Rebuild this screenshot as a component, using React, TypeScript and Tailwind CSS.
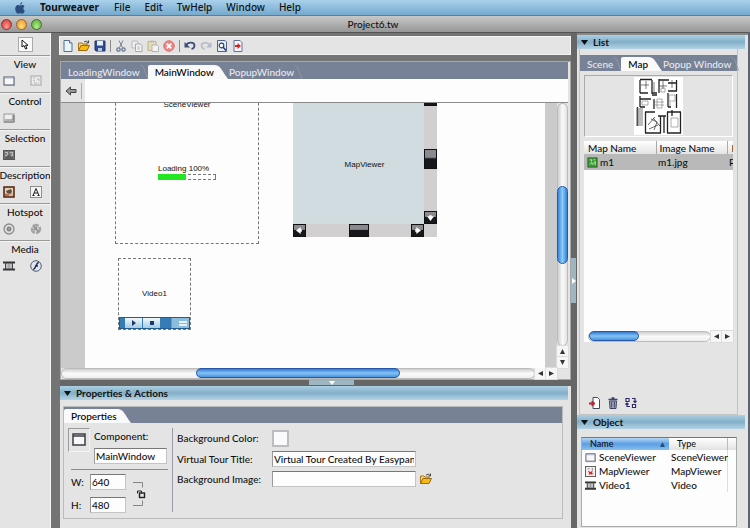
import type { ReactNode } from 'react'
import clsx from 'clsx'

const paletteGroups = [
  { title: 'View', tools: ['window', 'viewer'] },
  { title: 'Control', tools: ['button'] },
  { title: 'Selection', tools: ['thumbs'] },
  { title: 'Description', tools: ['picture', 'text'] },
  { title: 'Hotspot', tools: ['ring', 'spin'] },
  { title: 'Media', tools: ['film', 'flash'] },
]

const objects = [
  { icon: 'window', name: 'SceneViewer', type: 'SceneViewer' },
  { icon: 'map', name: 'MapViewer', type: 'MapViewer' },
  { icon: 'film', name: 'Video1', type: 'Video' },
]

const fileTools = ['new', 'open', 'save']
const editTools = ['cut', 'copy', 'paste', 'delete']
const historyTools = ['undo', 'redo', 'preview', 'publish']

const glyphs: Record<string, ReactNode> = {
  window: (
    <>
      <rect x="1" y="2" width="10" height="8" fill="#f8f8f8" stroke="#4d5666" />
      <path d="M1 10.5h10.5V3" stroke="#8a93a5" fill="none" />
      <path d="M2 3h8" stroke="#aab6cc" />
    </>
  ),
  viewer: (
    <>
      <rect x="1" y="1" width="10" height="9" fill="#ececec" stroke="#a5a5a5" />
      <path d="M3 3h2M7 4h2v2M3 5l2 1M4 8h3M8 8h1" stroke="#b4b4b4" fill="none" />
    </>
  ),
  button: (
    <>
      <rect x="1" y="2" width="10" height="8" fill="#eee" stroke="#999" />
      <path d="M2 8h8V3M1 10h10V3" stroke="#777" fill="none" />
    </>
  ),
  thumbs: (
    <>
      <rect x="0.5" y="1.5" width="11" height="9" fill="#777" stroke="#555" />
      <path d="M2 3h3v4H2zM7 3h3v4H7z" fill="#b9b9b9" />
      <path d="M3 4v2M4 7h4M8 4v2M2 9h8" stroke="#444" />
    </>
  ),
  picture: (
    <>
      <rect x="1" y="1" width="10" height="10" fill="#c9b9a5" stroke="#5b2c17" strokeWidth="1.6" />
      <path d="M2 2h8v5H2z" fill="#e3d3b4" />
      <path d="M3 5l5-2 1 3-2 2-3-1z" fill="#5b4b49" />
      <path d="M2 9h4" stroke="#c3512a" strokeWidth="1.5" />
    </>
  ),
  text: (
    <>
      <rect x="0.5" y="0.5" width="11" height="11" fill="#f4f4f4" stroke="#333" strokeDasharray="1 1" />
      <path d="M3 9.5L6 2.5l3 7M4 7h4M2.5 9.5h2M7.5 9.5h2" stroke="#222" fill="none" />
    </>
  ),
  ring: (
    <>
      <circle cx="6" cy="6" r="5" fill="#ddd" stroke="#8d8d8d" strokeWidth="1.3" />
      <circle cx="6" cy="6" r="2" fill="#999" stroke="#777" />
    </>
  ),
  spin: (
    <>
      <circle cx="6" cy="6" r="4" fill="#d0d0d0" stroke="#a5a5a5" strokeWidth="2.4" strokeDasharray="6 1.5" />
      <path d="M3 3l6 6M4 7l3-3" stroke="#8b8b8b" strokeWidth="1.3" />
    </>
  ),
  film: (
    <>
      <rect x="2" y="3" width="8" height="6" fill="#bcbcc2" />
      <path d="M0 2.5h12M0 9.5h12" stroke="#333" strokeWidth="2" />
      <path d="M2.5 2v8M9.5 2v8" stroke="#444" />
      <path d="M6 3v6" stroke="#777" strokeWidth=".6" />
    </>
  ),
  flash: (
    <>
      <circle cx="6" cy="6" r="5.3" fill="#dfe5ee" stroke="#58606e" />
      <path d="M8.8 2.5C6 2.5 6 9 3.2 9.5M5 6h3" stroke="#1f2f55" strokeWidth="1.5" fill="none" />
    </>
  ),
  map: (
    <>
      <rect x="0.5" y="0.5" width="11" height="11" fill="#f3eeee" stroke="#555" />
      <path d="M3 3h2M8 2v3M9 8H7" stroke="#888" />
      <path d="M3 5l3 1.5L8.5 5 7.5 8l1 1.5L6 9 4 9.500 4.500 7.500z" fill="#e02424" />
    </>
  ),
  new: (
    <>
      <path d="M2 .5h5.5L10 3v8.5H2z" fill="#eaf4fb" stroke="#53708f" />
      <path d="M7.5 .5V3H10" fill="#fff" stroke="#53708f" />
    </>
  ),
  open: (
    <>
      <path d="M.5 10.5V3h3.5l1 1h4v2" fill="#f6d365" stroke="#a4771b" />
      <path d="M.5 10.5L3 5.5h8.5L9 10.5z" fill="#f9b915" stroke="#9c6a12" />
      <path d="M6 2q2.5-2 4 .5M10.5 .5v2.5H8.5" fill="none" stroke="#454545" />
    </>
  ),
  save: (
    <>
      <path d="M1 1h10v10H2l-1-1z" fill="#2e4c92" stroke="#22376b" />
      <path d="M3 1h6v4.5H3z" fill="#e8eef8" />
      <path d="M4 8h4v3H4z" fill="#b9c5df" />
    </>
  ),
  cut: (
    <>
      <path d="M4 .5l3.5 7M8 .5L4.5 7.5" stroke="#7b8596" />
      <circle cx="3.5" cy="9.5" r="1.7" fill="none" stroke="#66738f" strokeWidth="1.2" />
      <circle cx="8.5" cy="9.5" r="1.7" fill="none" stroke="#66738f" strokeWidth="1.2" />
    </>
  ),
  copy: (
    <>
      <path d="M1 1h5l1 1v6H1z" fill="#eee" stroke="#b7bcc3" />
      <path d="M4.5 4h5l1.5 1.5v6H4.5z" fill="#f3f3f3" stroke="#a5aab3" />
      <path d="M6 7h3M6 9h3" stroke="#bbb" />
    </>
  ),
  paste: (
    <>
      <path d="M1 1.5h8v9H1z" fill="#e6dcb8" stroke="#bdb292" />
      <path d="M3.5 .5h3v2h-3z" fill="#bbb" />
      <path d="M5 5h5l1.5 1.5v5H5z" fill="#f3f3f3" stroke="#b0b4bb" />
    </>
  ),
  delete: (
    <>
      <circle cx="6" cy="6" r="5.3" fill="#ea8585" stroke="#dd7373" />
      <path d="M3.7 3.7l4.6 4.6M8.3 3.7L3.7 8.3" stroke="#fff" strokeWidth="1.8" />
    </>
  ),
  undo: (
    <>
      <path d="M2 5.500C4 1.500 10.500 2 10.500 5.500c0 2-1 3-3 3.500" fill="none" stroke="#3f4f79" strokeWidth="1.8" />
      <path d="M.5 2v5.5H6z" fill="#3f4f79" />
    </>
  ),
  redo: (
    <>
      <path d="M10 5.500C8 1.500 1.500 2 1.500 5.500c0 2 1 3 3 3.500" fill="none" stroke="#b4bac8" strokeWidth="1.6" />
      <path d="M11.5 2v5.5H6z" fill="#b4bac8" />
    </>
  ),
  preview: (
    <>
      <path d="M1.5 .5H9l1.5 1.5v9.5h-9z" fill="#e6eef8" stroke="#50648b" />
      <circle cx="5.5" cy="5.5" r="2.3" fill="#fff" stroke="#2d4274" strokeWidth="1.2" />
      <path d="M7 7l3 3.5" stroke="#2d4274" strokeWidth="1.6" />
    </>
  ),
  publish: (
    <>
      <path d="M2 .5h6L10 2.5v9H2z" fill="#f5f5fa" stroke="#60729b" />
      <path d="M3 5h2.500V3L9 6 5.500 9V7H3z" fill="#e02020" />
    </>
  ),
  add: (
    <>
      <path d="M4 .5h4.5l2 2v9H4z" fill="#fff" stroke="#444b5c" />
      <path d="M0 6.5h6M3.5 4v5" stroke="#c3202f" strokeWidth="2" />
    </>
  ),
  trash: (
    <>
      <path d="M1.5 2.5h9M4.5 1h3" stroke="#3b4466" strokeWidth="1.4" />
      <path d="M2.5 4h7L9 11.5H3z" fill="#a4abc1" stroke="#3b4466" />
      <path d="M4.7 5v5.5M7.3 5v5.5" stroke="#3b4466" />
    </>
  ),
  swap: (
    <>
      <path d="M1 1.5h3v3H1zM7.5 7.5h3v3h-3z" fill="#fff" stroke="#2f2b6b" strokeWidth="1.2" />
      <path d="M7 1.5h3V5M8.5 4L10 5.5 11.5 4M5 9.5H2V6.5M.5 7.5L2 6l1.5 1.5" fill="none" stroke="#2f2b6b" strokeWidth="1.2" />
    </>
  ),
  green: (
    <>
      <rect x="1" y="1" width="10" height="10" fill="#3f9c37" stroke="#2a5b25" />
      <path d="M3 3h2v2M7 3h2M3 8l2-2 1 2 3-3v4" stroke="#bfe8a8" fill="none" />
    </>
  ),
}

function Icon({ name, className = 'size-3' }: { name: string; className?: string }) {
  return (
    <svg viewBox="0 0 12 12" aria-hidden="true" className={clsx('shrink-0', className)}>
      {glyphs[name]}
    </svg>
  )
}

function ToolButton({ name }: { name: string }) {
  return (
    <button aria-label={name} className="flex size-4 items-center justify-center">
      <Icon name={name} />
    </button>
  )
}

function Tab({ label, active }: { label: string; active?: boolean }) {
  return (
    <button role="tab" aria-selected={!!active} className="flex h-[14px] items-stretch font-medium whitespace-nowrap">
      <span className={clsx('pl-[7px] leading-[14px]', active ? 'rounded-tl-xs bg-[#fafafa] text-black' : 'text-[#e6e9f0]')}>
        {label}
      </span>
      <svg viewBox="0 0 14 14" preserveAspectRatio="none" aria-hidden="true" className={clsx('h-[14px]', active ? 'w-[14px]' : 'w-2')}>
        {active ? (
          <path d="M0 0C7 0 7 5 14 14H0z" fill="#fafafa" />
        ) : (
          <path d="M0 0C7 0 7 5 14 14" fill="none" stroke="#959cab" />
        )}
      </svg>
    </button>
  )
}

function PanelHeader({ title }: { title: string }) {
  return (
    <h2 className="h-[14px] shrink-0 bg-linear-to-b from-[#acd0e3] via-[#82afc9] to-[#b4d3e4]">
      <button className="flex w-full items-center gap-[5px] pl-1 leading-[14px] font-bold">
        <svg viewBox="0 0 7 5" className="h-[5px] w-[7px]" aria-hidden="true">
          <path d="M0 0h7L3.5 5z" fill="#111" />
        </svg>
        {title}
      </button>
    </h2>
  )
}

function Arrow({ dir }: { dir: string }) {
  return (
    <button aria-label={dir} className="flex size-[11px] shrink-0 items-center justify-center bg-[#f6f6f6] outline outline-[#dcdcdc]">
      <svg
        viewBox="0 0 6 6"
        className={clsx('size-[5px]', dir === 'right' && 'rotate-90', dir === 'down' && 'rotate-180', dir === 'left' && '-rotate-90')}
      >
        <path d="M3 0l3 6H0z" fill="#333" />
      </svg>
    </button>
  )
}

function AppleMenuBar() {
  return (
    <nav className="flex h-[15px] shrink-0 items-center bg-linear-to-b from-[#a9d1ea] to-[#75a9ce] pl-[14px] font-['Noto_Sans',sans-serif] leading-[15px] font-medium">
      <a href="#apple" aria-label="Apple menu" className="mr-[14px]">
        <svg viewBox="0 0 12 13" className="h-3 w-3">
          <path
            d="M8.500 3.300c-1 0-1.600.5-2.200.5S4.800 3.300 4 3.300C2.200 3.300.8 4.800.8 7.300c0 2.700 1.700 5.400 3.200 5.400.8 0 1.200-.5 2.200-.5s1.300.5 2.100.5c1.300 0 2.500-1.900 2.900-3.200C9.300 8.600 9 5.800 11 4.700c-.6-.9-1.500-1.400-2.500-1.400zM6 3C5.900 1.600 7 .4 8.400.2 8.500 1.700 7.400 2.900 6 3z"
            fill="#2b4e7e"
          />
        </svg>
      </a>
      <a href="#app" className="mr-[15px] font-bold">Tourweaver</a>
      <div className="flex gap-[14px]">
        {['File', 'Edit', 'TwHelp', 'Window', 'Help'].map((item) => (
          <a key={item} href={'#' + item}>{item}</a>
        ))}
      </div>
    </nav>
  )
}

function TitleBar() {
  return (
    <header className="flex h-[17px] shrink-0 items-center gap-1 border-t border-[#777] bg-linear-to-b from-[#c8c8c8] to-[#979797] pl-[1px]">
      <button aria-label="Close" className="size-[11px] rounded-full border border-[#8d3434] bg-radial-[at_50%_75%] from-[#ff9c90] to-[#d42a2c]" />
      <button aria-label="Minimize" className="size-[11px] rounded-full border border-[#9b6429] bg-radial-[at_50%_75%] from-[#ffe07c] to-[#e88d24]" />
      <button aria-label="Zoom" className="size-[11px] rounded-full border border-[#44702f] bg-radial-[at_50%_75%] from-[#b8ee87] to-[#4aa535]" />
      <h1 className="flex-1 pr-[50px] text-center leading-4 font-medium">Project6.tw</h1>
    </header>
  )
}

function Palette() {
  return (
    <aside className="w-[51px] shrink-0 overflow-hidden border-r border-[#f5f5f5] bg-[#e4e4e4]">
      <div className="flex h-[22px] justify-center pt-1">
        <button aria-label="Select" className="flex size-[15px] items-center justify-center border border-[#aaa] bg-[#fafafa]">
          <svg viewBox="0 0 8 11" className="h-[11px] w-2">
            <path d="M1 1v7l2-1.500 1.500 3.500L6 9.500 4.500 6.300H7z" fill="#fff" stroke="#111" />
          </svg>
        </button>
      </div>
      {paletteGroups.map((group) => (
        <section key={group.title} className="h-[37px] border-t border-[#999] shadow-[inset_0_1px_#f4f4f4]">
          <h2 className="flex h-[17px] justify-center leading-[17px] font-medium whitespace-nowrap">{group.title}</h2>
          <div className="flex gap-[11px] pl-[1px]">
            {group.tools.map((tool) => (
              <ToolButton key={tool} name={tool} />
            ))}
          </div>
        </section>
      ))}
    </aside>
  )
}

function Toolbar() {
  return (
    <div role="toolbar" className="flex h-[19px] items-center border border-[#f4f4f4] bg-[#e4e4e4]">
      <div className="flex">{fileTools.map((t) => <ToolButton key={t} name={t} />)}</div>
      <div className="mx-[2px] h-3 w-px bg-[#8b8b8b]" />
      <div className="flex">{editTools.map((t) => <ToolButton key={t} name={t} />)}</div>
      <div className="mx-[2px] h-3 w-px bg-[#8b8b8b]" />
      <div className="flex">{historyTools.map((t) => <ToolButton key={t} name={t} />)}</div>
    </div>
  )
}

function KnobButton({ dir, className }: { dir?: string; className: string }) {
  return (
    <div className={clsx('absolute flex items-center justify-center border border-[#111] bg-linear-to-b from-[#8b8b8f] from-40% to-[#17171c] to-50%', className)}>
      {dir && (
        <svg viewBox="0 0 6 6" className={clsx('size-[7px]', dir === 'left' && '-rotate-90', dir === 'right' && 'rotate-90', dir === 'down' && 'rotate-180')}>
          <path d="M3 0l3 4H4v1H2V4H0z" fill="#fff" />
        </svg>
      )}
    </div>
  )
}

function Canvas() {
  return (
    <div className="flex min-h-[266px] flex-1 border-t border-[#8b8b8b]">
      <div className="w-6 bg-[#cbcbcb]" />
      <div className="relative flex-1 overflow-hidden bg-[#fdfdfd] font-['Liberation_Sans',sans-serif] text-[8px]">
        <div className="absolute -top-5 left-[30px] h-[161px] w-[144px] border border-dashed border-[#777]">
          <p className="pt-4 text-center leading-[9px]">SceneViewer</p>
          <div className="absolute top-[80px] left-[42px] w-[58px]">
            <p className="leading-[10px] whitespace-nowrap">Loading 100%</p>
            <div className="h-[6px] border border-dashed border-[#777]">
              <div className="-mt-px -ml-px h-[6px] w-7 bg-[#22e622]" />
            </div>
          </div>
        </div>
        <div className="absolute -top-5 left-[208px] h-[154px] w-[144px] bg-[#d2cfd0]">
          <div className="flex h-[141px] w-[131px] items-center justify-center bg-[#d1dce1] pt-[22px] pl-3">MapViewer</div>
          <KnobButton className="top-[10px] right-0 h-[13px] w-[13px]" />
          <KnobButton className="top-[66px] right-0 h-5 w-[13px]" />
          <KnobButton dir="down" className="top-[128px] right-0 h-[13px] w-[13px]" />
          <KnobButton dir="left" className="bottom-0 left-0 h-[13px] w-[13px]" />
          <KnobButton className="bottom-0 left-14 h-[13px] w-5" />
          <KnobButton dir="right" className="right-[13px] bottom-0 h-[13px] w-[13px]" />
        </div>
        <div className="absolute top-[155px] left-[33px] flex h-[72px] w-[73px] flex-col border border-dashed border-[#777]">
          <div className="flex flex-1 items-center justify-center pt-3">Video1</div>
          <div className="flex h-3 items-stretch gap-px border border-[#235c95] bg-[#367db5] pl-[5px]">
            <div className="flex w-[17px] items-center justify-center bg-linear-to-b from-[#f2f8fc] to-[#a5cbe3]">
              <svg viewBox="0 0 6 6" className="size-[6px]"><path d="M1 0l4 3-4 3z" fill="#153b6a" /></svg>
            </div>
            <div className="flex w-[17px] items-center justify-center bg-linear-to-b from-[#f2f8fc] to-[#a5cbe3]">
              <div className="size-1 bg-[#153b6a]" />
            </div>
            <div className="flex flex-1 flex-col items-end justify-center gap-px bg-[#8bbddd] bg-linear-to-r from-[#367db5] from-35% to-[#8bbddd] to-40% pr-[2px]">
              <div className="h-[2px] w-2 bg-[#e5f2fa]" />
              <div className="h-[2px] w-2 bg-[#e5f2fa]" />
            </div>
          </div>
        </div>
      </div>
      <div className="w-3 bg-[#cbcbcb]" />
      <div className="flex w-[11px] flex-col">
        <div className="flex-1 rounded-full border border-[#bbb] bg-linear-to-r from-[#cfcfcf] via-[#fafafa] to-[#e2e2e2] pt-[82px]">
          <div className="-mx-px h-[78px] rounded-full border border-[#2657a8] bg-linear-to-r from-[#3b86de] via-[#8bcbf8] to-[#3480d5]" />
        </div>
        <Arrow dir="up" />
        <Arrow dir="down" />
      </div>
    </div>
  )
}

function Editor() {
  return (
    <main className="flex flex-1 flex-col border border-[#a8a8a8] bg-[#e4e4e4] pr-[2px]">
      <div role="tablist" className="flex h-[17px] items-end bg-[#788297] text-white">
        <Tab label="LoadingWindow" />
        <Tab label="MainWindow" active />
        <div className="-ml-[6px]"><Tab label="PopupWindow" /></div>
      </div>
      <div className="flex h-[23px] items-center bg-[#fdfdfd]">
        <div className="flex h-full w-6 items-center bg-[#e6e6e6] pl-1">
          <button aria-label="Back">
            <svg viewBox="0 0 12 10" className="h-[10px] w-3">
              <path d="M1 5l4.500-4v2.500H11v3H5.500V9z" fill="#999" stroke="#444" />
            </svg>
          </button>
          <div className="ml-1 h-4 w-px bg-[#aaa]" />
        </div>
      </div>
      <Canvas />
      <div className="flex h-[11px] pr-[11px]">
        <div className="flex-1 rounded-full border border-[#bbb] bg-linear-to-b from-[#cfcfcf] via-[#fafafa] to-[#eee] pr-[27%] pl-[27%]">
          <div className="-mt-px h-[10px] rounded-full border border-[#2657a8] bg-linear-to-b from-[#3579cf] via-[#83c3f5] to-[#4c93df]" />
        </div>
        <Arrow dir="left" />
        <Arrow dir="right" />
      </div>
    </main>
  )
}

const field = 'h-[16px] border border-[#c4c4c4] border-t-[#777] border-l-[#999] bg-[#fdfdfd] px-[1px] leading-[14px] font-medium outline-none'

function Properties() {
  return (
    <section className="flex h-[142px] shrink-0 flex-col bg-[#e4e4e4] pr-2">
      <div className="-mr-2 pr-[3px]"><PanelHeader title="Properties & Actions" /></div>
      <div className="mt-[6px] ml-[3px] border border-[#bbb]">
        <div role="tablist" className="flex h-4 items-end bg-[#788297]">
          <Tab label="Properties" active />
        </div>
        <div className="flex h-[95px] pt-[5px]">
          <div className="w-[103px] pl-1">
            <div className="flex gap-1">
              <button aria-label="Component type" className="flex size-6 items-center justify-center border border-[#999] border-r-[#f4f4f4] border-b-[#f4f4f4]">
                <svg viewBox="0 0 14 14" className="size-[14px]">
                  <rect x="1" y="1" width="12" height="11" fill="#f7f7f7" stroke="#3c3c46" strokeWidth="1.5" />
                  <path d="M1 3h12" stroke="#3c3c46" strokeWidth="1.5" />
                </svg>
              </button>
              <div className="flex flex-col gap-1">
                <label htmlFor="component" className="leading-4 font-medium">Component:</label>
                <input id="component" defaultValue="MainWindow" className={clsx(field, 'w-[73px]')} />
              </div>
            </div>
            <div className="mt-[5px] ml-[3px] h-px w-[97px] bg-[#8b8b98]" />
            <div className="mt-1 ml-[3px] flex items-center">
              <div className="flex flex-col gap-[7px]">
                <div className="flex">
                  <label htmlFor="width" className="w-[19px] leading-4 font-medium">W:</label>
                  <input id="width" defaultValue="640" className={clsx(field, 'w-9')} />
                </div>
                <div className="flex">
                  <label htmlFor="height" className="w-[19px] leading-4 font-medium">H:</label>
                  <input id="height" defaultValue="480" className={clsx(field, 'w-9')} />
                </div>
              </div>
              <button aria-label="Lock proportions" className="ml-[7px]">
                <svg viewBox="0 0 13 26" className="h-[26px] w-[13px]">
                  <path d="M0 1.5h9.500v5M0 24.5h9.500v-5" fill="none" stroke="#858585" />
                  <rect x="6.5" y="12" width="5" height="4.5" fill="none" stroke="#222" strokeWidth="1.4" />
                  <path d="M4.5 12.500V10h4v2.500" fill="none" stroke="#222" />
                </svg>
              </button>
            </div>
          </div>
          <div className="ml-[5px] h-[84px] w-px bg-[#9999a3]" />
          <div className="ml-[4px] flex flex-col gap-1 pt-[2px] font-medium">
            <div className="flex items-center">
              <label htmlFor="bg-color" className="w-[95px]">Background Color:</label>
              <button id="bg-color" className="size-[17px] border-2 border-[#bcbcc2] bg-[#fafafa]" />
            </div>
            <div className="flex items-center">
              <label htmlFor="tour-title" className="w-[95px]">Virtual Tour Title:</label>
              <input id="tour-title" defaultValue="Virtual Tour Created By Easypano" className={clsx(field, 'w-[144px]')} />
            </div>
            <div className="flex items-center">
              <label htmlFor="bg-image" className="w-[95px]">Background Image:</label>
              <input id="bg-image" className={clsx(field, 'mr-1 w-[144px]')} />
              <button aria-label="Browse"><Icon name="open" /></button>
            </div>
          </div>
        </div>
      </div>
    </section>
  )
}

function FloorPlan() {
  return (
    <svg viewBox="0 0 49 58" className="h-[58px] w-[49px] bg-white" role="img" aria-label="m1.jpg">
      <g fill="none" stroke="#222">
        <path d="M6 2.500h12M6 3v13M6 16h8M18 3v14M25 2v14M18 16h5M25 3h10M34 6h9M42.500 3v11M34 14h9M34 16v14M42.500 17v14M34 30h3" strokeWidth="1.3" />
        <path d="M12 4v8M20 5v10M29 4v8M38 3v8M7 8h8M25 9h8" strokeWidth=".6" />
        <path d="M6 19v11M6 22h11M18 18h5M20 22v10M6 30h5M3.500 30v19M11.500 35v21M11 35h10M11 56h16M26.500 39v17M30 39v17" strokeWidth="1.3" />
        <path d="M33 35h14M33.500 35v21M46.500 35v21M33 56h14M38 33v6M24 39h8" strokeWidth="1.3" />
        <path d="M2 32h7M2 34h7M2 36h7M2 38h7M2 40h7M2 42h7M2 44h7M2 46h7M2 48h7" stroke="#777" />
        <path d="M23 22h5v9h-5zM21 25h9M21 28h9M35 18h6v6h-6zM36 25v4M27 11h4v4h-4zM8 24h6v4H8zM37 41h7v9h-7z" stroke="#777" strokeWidth=".6" />
        <path d="M17 42l6 3-3 8M14 48l7-8M19 41l7 8M15 52l9-4" stroke="#444" strokeWidth=".8" />
      </g>
    </svg>
  )
}

function ListPanel() {
  return (
    <section className="flex flex-1 flex-col">
      <PanelHeader title="List" />
      <div className="mr-[7px] ml-[2px] flex flex-1 flex-col border border-t-0 border-[#c2c2c2] pt-[6px]">
        <div role="tablist" className="flex h-4 items-end bg-[#788297]">
          <Tab label="Scene" />
          <Tab label="Map" active />
          <div className="-ml-[6px]"><Tab label="Popup Window" /></div>
        </div>
        <div className="mx-1 mt-1 flex h-[62px] items-center justify-center border border-[#aaa] border-r-white border-b-white">
          <FloorPlan />
        </div>
        <div className="mx-1 mt-1 h-[190px] overflow-hidden bg-[#fdfdfd]">
          <table className="w-full table-fixed text-left font-medium whitespace-nowrap">
            <thead>
              <tr className="h-[13px] bg-linear-to-b from-white to-[#e4e4e4] leading-3">
                <th className="w-[72px] border-r border-[#aaa] pl-1 font-medium">Map Name</th>
                <th className="w-[71px] border-r border-[#aaa] pl-[3px] font-medium">Image Name</th>
                <th className="overflow-hidden pl-1 font-medium">P</th>
              </tr>
            </thead>
            <tbody>
              <tr className="h-4 bg-[#b9b9b9] leading-4">
                <td className="pl-[3px]">
                  <div className="flex items-center gap-[2px]"><Icon name="green" className="size-[11px]" />m1</div>
                </td>
                <td className="pl-[2px]">m1.jpg</td>
                <td className="overflow-hidden pl-[2px]">P</td>
              </tr>
            </tbody>
          </table>
        </div>
        <div className="mx-1 flex h-[11px] bg-white pl-1">
          <div className="flex-1 rounded-full border border-[#bbb] bg-linear-to-b from-[#cfcfcf] via-[#fafafa] to-[#eee]">
            <div className="-mt-px h-[10px] w-[50px] rounded-full border border-[#2657a8] bg-linear-to-b from-[#3579cf] via-[#83c3f5] to-[#4c93df]" />
          </div>
          <Arrow dir="left" />
          <Arrow dir="right" />
        </div>
        <div className="mt-auto flex gap-[2px] pb-[3px] pl-[7px]">
          <ToolButton name="add" />
          <ToolButton name="trash" />
          <ToolButton name="swap" />
        </div>
      </div>
    </section>
  )
}

function ObjectPanel() {
  return (
    <section className="h-[113px] shrink-0">
      <PanelHeader title="Object" />
      <div className="mt-2 mr-2 ml-1 h-[90px] border border-[#aaa] border-t-[#777] bg-[#fdfdfd]">
        <table className="w-full table-fixed text-left font-medium whitespace-nowrap">
          <thead>
            <tr className="h-3 bg-linear-to-b from-white to-[#e2e2e2] text-[9px] leading-3">
              <th className="w-[87px] bg-linear-to-b from-[#b6d6f5] via-[#5a9ee4] to-[#86c0f0] pl-2 font-medium">
                <div className="flex items-center justify-between pr-1">
                  Name
                  <svg viewBox="0 0 5 5" className="size-[5px]"><path d="M2.5 0L5 5H0z" fill="#234d80" /></svg>
                </div>
              </th>
              <th className="w-[58px] pl-2 font-medium">Type</th>
              <th className="border-l border-[#bbb]" />
            </tr>
          </thead>
          <tbody>
            {objects.map((o) => (
              <tr key={o.name} className="h-[14px] leading-[14px]">
                <td className="pl-[3px]">
                  <div className="flex items-center gap-[3px]"><Icon name={o.icon} className="size-[11px]" />{o.name}</div>
                </td>
                <td className="pl-[2px]">{o.type}</td>
                <td className="border-l border-[#ddd]" />
              </tr>
            ))}
          </tbody>
        </table>
      </div>
    </section>
  )
}

export default function App() {
  return (
    <div className="flex min-h-screen flex-col bg-[#5d6470] font-['Lato','Open_Sans',sans-serif] text-[10px] text-[#111]">
      <AppleMenuBar />
      <TitleBar />
      <div className="mr-[2px] flex flex-1 border-t border-[#555] bg-[#747474]">
        <Palette />
        <div className="ml-2 flex min-w-0 flex-1 flex-col pt-[3px]">
          <Toolbar />
          <div className="mt-[6px] ml-[1px] flex flex-1 flex-col">
            <Editor />
            <div className="flex h-[6px] shrink-0 justify-center bg-[#666]">
              <button aria-label="Collapse properties" className="ml-8 flex h-[5px] w-[45px] items-center justify-center bg-[#9eb5c2]">
                <svg viewBox="0 0 6 4" className="h-1 w-[6px]"><path d="M0 0h6L3 4z" fill="#fff" /></svg>
              </button>
            </div>
            <Properties />
          </div>
        </div>
        <div className="flex w-[6px] items-center bg-[#666]">
          <button aria-label="Collapse list" className="flex h-[45px] w-[5px] items-center justify-center bg-[#9eb5c2]">
            <svg viewBox="0 0 4 6" className="h-[6px] w-1"><path d="M0 0v6l4-3z" fill="#fff" /></svg>
          </button>
        </div>
        <div className="flex w-[171px] shrink-0 flex-col border-t-2 border-[#888] bg-[#e4e4e4] pr-[3px]">
          <ListPanel />
          <ObjectPanel />
        </div>
      </div>
    </div>
  )
}
